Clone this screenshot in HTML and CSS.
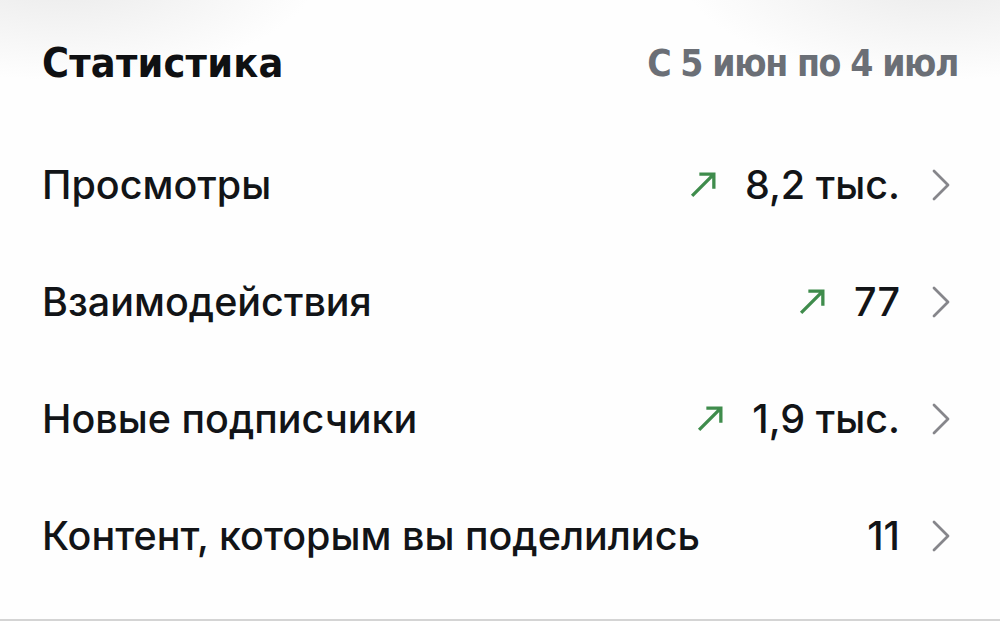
FILE: index.html
```html
<!DOCTYPE html>
<html>
<head>
	<meta charset="UTF-8">
	<title>Статистика</title>
	<link rel="stylesheet" href="styles.css">
</head>
<body>
	<div class="stats">
		<div class="head">
			<h1 class="title">Статистика</h1>
			<span class="period">С 5 июн по 4 июл</span>
		</div>
		<div class="row">
			<span class="label">Просмотры</span>
			<span class="value">
				<svg class="up" viewBox="0 0 28 28"><path d="M3 25 L24 4 M10 4 H24 V18"/></svg>
				8,2 тыс.
			</span>
			<svg class="chev" viewBox="0 0 18 32"><path d="M2 2 L16 16 L2 30"/></svg>
		</div>
		<div class="row">
			<span class="label">Взаимодействия</span>
			<span class="value">
				<svg class="up" viewBox="0 0 28 28"><path d="M3 25 L24 4 M10 4 H24 V18"/></svg>
				77
			</span>
			<svg class="chev" viewBox="0 0 18 32"><path d="M2 2 L16 16 L2 30"/></svg>
		</div>
		<div class="row">
			<span class="label">Новые подписчики</span>
			<span class="value">
				<svg class="up" viewBox="0 0 28 28"><path d="M3 25 L24 4 M10 4 H24 V18"/></svg>
				1,9 тыс.
			</span>
			<svg class="chev" viewBox="0 0 18 32"><path d="M2 2 L16 16 L2 30"/></svg>
		</div>
		<div class="row">
			<span class="label">Контент, которым вы поделились</span>
			<span class="value">11</span>
			<svg class="chev" viewBox="0 0 18 32"><path d="M2 2 L16 16 L2 30"/></svg>
		</div>
	</div>
</body>
</html>
```
FILE: styles.css
```css
* {
	box-sizing: border-box;
}
html, body {
	height: 100%;
}
body {
	margin: 0;
	font-family: Inter, "Noto Sans", sans-serif;
	color: #121417;
	background:
		radial-gradient(ellipse 260px 110px at 60px -30px, #e9e9e9, rgba(254,254,254,0) 100%),
		radial-gradient(ellipse 260px 110px at 940px -30px, #e9e9e9, rgba(254,254,254,0) 100%),
		#fefefe;
	border-bottom: 2px solid #d4d4d4;
	overflow: hidden;
}
.stats {
	padding: 0 50px 0 42px;
}
.head {
	display: flex;
	justify-content: space-between;
	align-items: center;
	height: 126px;
}
.title {
	margin: 0;
	font-family: "DejaVu Sans Condensed", "Liberation Sans", sans-serif;
	font-weight: bold;
	font-size: 41px;
	letter-spacing: 0.2px;
	color: #0f1012;
}
.period {
	font-family: "DejaVu Sans Condensed", "Liberation Sans", sans-serif;
	font-weight: bold;
	font-size: 37px;
	letter-spacing: -1.4px;
	color: #6b6f76;
	margin-right: -8px;
}
.row {
	display: flex;
	align-items: center;
	height: 117px;
	font-size: 39.5px;
	font-weight: 500;
	letter-spacing: 0;
}
.label {
	flex: 1;
}
.value {
	display: flex;
	align-items: center;
}
.up {
	width: 29px;
	height: 29px;
	margin-right: 27px;
	fill: none;
	stroke: #3f8c4c;
	stroke-width: 3.2;
}
.chev {
	width: 18px;
	height: 32px;
	margin-left: 32px;
	fill: none;
	stroke: #86868b;
	stroke-width: 2.8;
	stroke-linecap: round;
	stroke-linejoin: round;
}
```
